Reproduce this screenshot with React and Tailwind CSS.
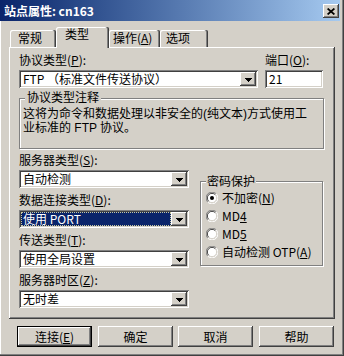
import React from 'react'

const font = "font-['Noto_Sans_CJK_SC','Noto_Sans',sans-serif]"
const tight = "font-['Liberation_Sans','Noto_Sans_CJK_SC',sans-serif]"
const raised = 'shadow-[inset_-1px_-1px_#404040,inset_1px_1px_#ffffff,inset_-2px_-2px_#808080,inset_2px_2px_#d4d0c8]'
const sunken = 'shadow-[inset_1px_1px_#808080,inset_-1px_-1px_#ffffff,inset_2px_2px_#404040,inset_-2px_-2px_#d4d0c8]'

const tabs = [
  { label: '常规', w: 'w-[46px] pl-[8px]' },
  { label: '类型', w: 'w-[53px] pl-[9px]', active: true },
  { label: <>操作(<u className="underline-offset-[1px]">A</u>)</>, w: 'w-[51px] pl-[4px]' },
  { label: '选项', w: 'w-[48px] pl-[6px]' },
]

const rows = [
  { label: '服务器类型', key: 'S', value: '自动检测' },
  { label: '数据连接类型', key: 'D', value: '使用 PORT', selected: true },
  { label: '传送类型', key: 'T', value: '使用全局设置' },
  { label: '服务器时区', key: 'Z', value: '无时差' },
]

function Key({ children }) {
  return <u className="underline-offset-[1px]">{children}</u>
}

function Label({ children }) {
  return <div className="h-[14px] leading-[14px] mb-[3px] whitespace-nowrap">{children}</div>
}

function DropBtn() {
  return (
    <div className={`w-[16px] h-[14px] shrink-0 bg-[#d4d0c8] flex items-center justify-center pt-[1px] ${raised}`}>
      <svg width="7" height="4" viewBox="0 0 7 4">
        <path d="M0 0h7v1h-1v1h-1v1h-1v1h-1v-1h-1v-1h-1v-1h-1z" fill="#000" />
      </svg>
    </div>
  )
}

function Combo({ w, value, selected }) {
  return (
    <div className={`flex h-[18px] ${w} bg-white p-[2px] ${sunken}`}>
      {selected ? (
        <div className="flex-1 flex items-center pl-[2px] bg-[#0a246a] text-white outline outline-1 outline-dotted outline-[#c8c8a0] -outline-offset-1 leading-[12px] whitespace-nowrap">
          {value}
        </div>
      ) : (
        <div className="flex-1 flex items-center pl-[2px] leading-[12px] whitespace-nowrap">{value}</div>
      )}
      <DropBtn />
    </div>
  )
}

function Radio({ on }) {
  return (
    <svg width="12" height="12" viewBox="0 0 12 12" className="shrink-0">
      <circle cx="6" cy="6" r="5" fill="#fff" />
      <path d="M10.2 1.8A5.6 5.6 0 0 0 1.8 10.2" stroke="#808080" fill="none" />
      <path d="M9.3 2.7A4.6 4.6 0 0 0 2.7 9.3" stroke="#404040" fill="none" />
      <path d="M1.8 10.2A5.6 5.6 0 0 0 10.2 1.8" stroke="#ffffff" fill="none" />
      <path d="M2.7 9.3A4.6 4.6 0 0 0 9.3 2.7" stroke="#d4d0c8" fill="none" />
      {on && <circle cx="6" cy="6" r="2" fill="#000" />}
    </svg>
  )
}

function Button({ children, def, className = '' }) {
  return (
    <div
      className={`w-[75px] h-[21px] flex items-center justify-center leading-[12px] bg-[#d4d0c8] ${raised} ${
        def ? 'border border-black' : ''
      } ${className}`}
    >
      {children}
    </div>
  )
}

export default function App() {
  return (
    <div
      className={`w-[344px] h-[356px] bg-[#d4d0c8] text-[12px] text-black ${font} shadow-[inset_-1px_-1px_#404040,inset_-2px_-2px_#808080,inset_1px_0_#ffffff] overflow-hidden`}
    >
      {/* title bar */}
      <div className="h-[21px] w-[340px] flex justify-between items-start bg-linear-to-r from-[#0a246a] to-[#a6caf0]">
        <span className="pl-[4px] pt-[5px] text-white font-bold leading-[12px] whitespace-nowrap">站点属性: cn163</span>
        <div className={`mt-[4px] mr-[1px] w-[16px] h-[14px] flex items-center justify-center bg-[#d4d0c8] ${raised}`}>
          <svg width="8" height="7" viewBox="0 0 8 7">
            <path d="M0.6 0.5L7.4 6.5M7.4 0.5L0.6 6.5" stroke="#000" strokeWidth="1.7" />
          </svg>
        </div>
      </div>

      {/* tabs */}
      <div className="flex items-end h-[20px] mt-[6px] pl-[10px]">
        {tabs.map((t, i) =>
          t.active ? (
            <div
              key={i}
              className={`${t.w} h-[21px] -mb-[1px] relative z-10 pt-[1px] leading-[12px] bg-[#d4d0c8] rounded-t-[2px] shadow-[inset_-1px_0_#404040,inset_-2px_0_#808080,inset_1px_1px_#ffffff] whitespace-nowrap`}
            >
              {t.label}
            </div>
          ) : (
            <div
              key={i}
              className={`${t.w} h-[17px] pt-[2px] leading-[12px] bg-[#d4d0c8] rounded-t-[2px] shadow-[inset_-1px_0_#404040,inset_-2px_0_#808080,inset_1px_1px_#ffffff] whitespace-nowrap`}
            >
              {t.label}
            </div>
          )
        )}
      </div>

      {/* panel */}
      <div className={`ml-[9px] w-[326px] h-[272px] pl-[10px] pt-[6px] ${raised}`}>
        <div className="flex gap-[7px]">
          <div className="w-[239px]">
            <Label>
              协议类型(<Key>P</Key>):
            </Label>
            <Combo w="w-[239px]" value="FTP （标准文件传送协议）" />
          </div>
          <div className="w-[58px]">
            <Label>
              端口(<Key>O</Key>):
            </Label>
            <div className={`h-[18px] bg-white pl-[4px] flex items-center leading-[12px] ${sunken}`}>21</div>
          </div>
        </div>

        <fieldset
          className={`mt-[4px] w-[305px] border border-[#808080] shadow-[inset_1px_1px_#ffffff,1px_1px_#ffffff] px-[3px] pt-[3px] pb-[13px] ${tight}`}
        >
          <legend className="ml-[2px] px-[2px] leading-[12px] bg-[#d4d0c8]">协议类型注释</legend>
          <div className="leading-[14px] whitespace-nowrap">这将为命令和数据处理以非安全的(纯文本)方式使用工</div>
          <div className="leading-[14px] whitespace-nowrap">业标准的 FTP 协议。</div>
        </fieldset>

        <div className="flex mt-[4px]">
          <div className="w-[170px]">
            {rows.map((r) => (
              <div key={r.key} className="mb-[5px]">
                <Label>
                  {r.label}(<Key>{r.key}</Key>):
                </Label>
                <Combo w="w-[170px]" value={r.value} selected={r.selected} />
              </div>
            ))}
          </div>
          <fieldset className="ml-[11px] mt-[22px] w-[123px] self-start border border-[#808080] shadow-[inset_1px_1px_#ffffff,1px_1px_#ffffff] pl-[5px] pt-[2px] pb-[4px]">
            <legend className="px-[1px] leading-[12px] bg-[#d4d0c8]">密码保护</legend>
            <div className="flex items-center gap-[4px] h-[18px] leading-[12px] whitespace-nowrap">
              <Radio on />
              <span>
                不加密(<Key>N</Key>)
              </span>
            </div>
            <div className="flex items-center gap-[4px] h-[18px] leading-[12px] whitespace-nowrap">
              <Radio />
              <span>
                MD<Key>4</Key>
              </span>
            </div>
            <div className="flex items-center gap-[4px] h-[18px] leading-[12px] whitespace-nowrap">
              <Radio />
              <span>
                MD<Key>5</Key>
              </span>
            </div>
            <div className="flex items-center gap-[4px] h-[18px] leading-[12px] whitespace-nowrap">
              <Radio />
              <span>
                自动检测 OTP(<Key>A</Key>)
              </span>
            </div>
          </fieldset>
        </div>
      </div>

      {/* buttons */}
      <div className="flex mt-[7px] pl-[17px]">
        <Button def>
          连接(<Key>E</Key>)
        </Button>
        <Button className="ml-[6px]">确定</Button>
        <Button className="ml-[5px]">取消</Button>
        <Button className="ml-[6px]">帮助</Button>
      </div>
    </div>
  )
}
